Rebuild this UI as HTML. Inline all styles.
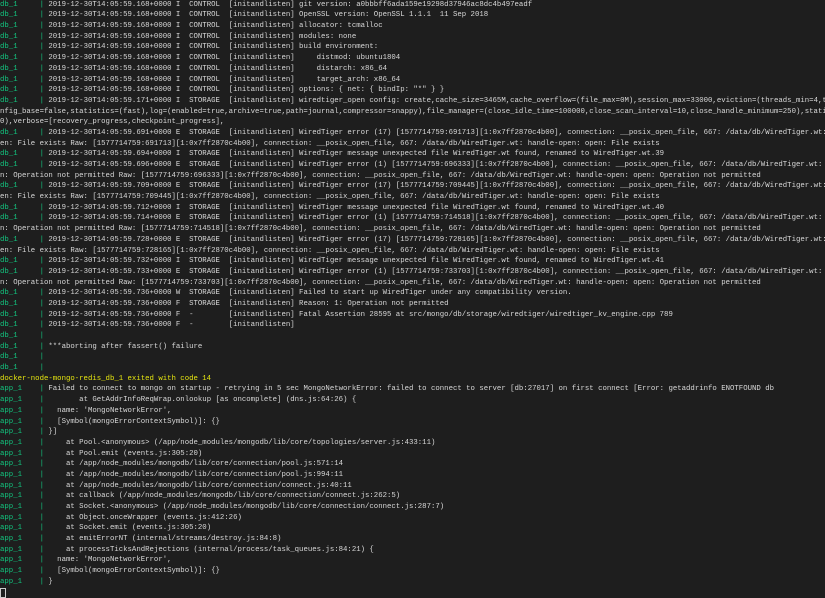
<!DOCTYPE html>
<html><head><meta charset="utf-8"><style>
html,body{margin:0;padding:0;background:#1e1e1e;width:825px;height:597px;overflow:hidden}
pre{margin:0;margin-top:-0.3px;font-family:"Liberation Mono",monospace;font-size:7.34px;line-height:10.686px;color:#d8d8d8;white-space:pre;overflow:hidden;width:825px}
.g{color:#12c57f}.y{color:#e5e510}
.cur{position:absolute;left:0;top:588px;width:4px;height:8px;border:1px solid #ccc}
</style></head><body><pre><span class="g">db_1     |</span> 2019-12-30T14:05:59.168+0000 I  CONTROL  [initandlisten] git version: a0bbbff6ada159e19298d37946ac8dc4b497eadf
<span class="g">db_1     |</span> 2019-12-30T14:05:59.168+0000 I  CONTROL  [initandlisten] OpenSSL version: OpenSSL 1.1.1  11 Sep 2018
<span class="g">db_1     |</span> 2019-12-30T14:05:59.168+0000 I  CONTROL  [initandlisten] allocator: tcmalloc
<span class="g">db_1     |</span> 2019-12-30T14:05:59.168+0000 I  CONTROL  [initandlisten] modules: none
<span class="g">db_1     |</span> 2019-12-30T14:05:59.168+0000 I  CONTROL  [initandlisten] build environment:
<span class="g">db_1     |</span> 2019-12-30T14:05:59.168+0000 I  CONTROL  [initandlisten]     distmod: ubuntu1804
<span class="g">db_1     |</span> 2019-12-30T14:05:59.168+0000 I  CONTROL  [initandlisten]     distarch: x86_64
<span class="g">db_1     |</span> 2019-12-30T14:05:59.168+0000 I  CONTROL  [initandlisten]     target_arch: x86_64
<span class="g">db_1     |</span> 2019-12-30T14:05:59.168+0000 I  CONTROL  [initandlisten] options: { net: { bindIp: "*" } }
<span class="g">db_1     |</span> 2019-12-30T14:05:59.171+0000 I  STORAGE  [initandlisten] wiredtiger_open config: create,cache_size=3465M,cache_overflow=(file_max=0M),session_max=33000,eviction=(threads_min=4,threads_max=4),co
nfig_base=false,statistics=(fast),log=(enabled=true,archive=true,path=journal,compressor=snappy),file_manager=(close_idle_time=100000,close_scan_interval=10,close_handle_minimum=250),statistics_log=(wait=
0),verbose=[recovery_progress,checkpoint_progress],
<span class="g">db_1     |</span> 2019-12-30T14:05:59.691+0000 E  STORAGE  [initandlisten] WiredTiger error (17) [1577714759:691713][1:0x7ff2870c4b00], connection: __posix_open_file, 667: /data/db/WiredTiger.wt: handle-op
en: File exists Raw: [1577714759:691713][1:0x7ff2870c4b00], connection: __posix_open_file, 667: /data/db/WiredTiger.wt: handle-open: open: File exists
<span class="g">db_1     |</span> 2019-12-30T14:05:59.694+0000 I  STORAGE  [initandlisten] WiredTiger message unexpected file WiredTiger.wt found, renamed to WiredTiger.wt.39
<span class="g">db_1     |</span> 2019-12-30T14:05:59.696+0000 E  STORAGE  [initandlisten] WiredTiger error (1) [1577714759:696333][1:0x7ff2870c4b00], connection: __posix_open_file, 667: /data/db/WiredTiger.wt: handle-ope
n: Operation not permitted Raw: [1577714759:696333][1:0x7ff2870c4b00], connection: __posix_open_file, 667: /data/db/WiredTiger.wt: handle-open: open: Operation not permitted
<span class="g">db_1     |</span> 2019-12-30T14:05:59.709+0000 E  STORAGE  [initandlisten] WiredTiger error (17) [1577714759:709445][1:0x7ff2870c4b00], connection: __posix_open_file, 667: /data/db/WiredTiger.wt: handle-op
en: File exists Raw: [1577714759:709445][1:0x7ff2870c4b00], connection: __posix_open_file, 667: /data/db/WiredTiger.wt: handle-open: open: File exists
<span class="g">db_1     |</span> 2019-12-30T14:05:59.712+0000 I  STORAGE  [initandlisten] WiredTiger message unexpected file WiredTiger.wt found, renamed to WiredTiger.wt.40
<span class="g">db_1     |</span> 2019-12-30T14:05:59.714+0000 E  STORAGE  [initandlisten] WiredTiger error (1) [1577714759:714518][1:0x7ff2870c4b00], connection: __posix_open_file, 667: /data/db/WiredTiger.wt: handle-ope
n: Operation not permitted Raw: [1577714759:714518][1:0x7ff2870c4b00], connection: __posix_open_file, 667: /data/db/WiredTiger.wt: handle-open: open: Operation not permitted
<span class="g">db_1     |</span> 2019-12-30T14:05:59.728+0000 E  STORAGE  [initandlisten] WiredTiger error (17) [1577714759:728165][1:0x7ff2870c4b00], connection: __posix_open_file, 667: /data/db/WiredTiger.wt: handle-op
en: File exists Raw: [1577714759:728165][1:0x7ff2870c4b00], connection: __posix_open_file, 667: /data/db/WiredTiger.wt: handle-open: open: File exists
<span class="g">db_1     |</span> 2019-12-30T14:05:59.732+0000 I  STORAGE  [initandlisten] WiredTiger message unexpected file WiredTiger.wt found, renamed to WiredTiger.wt.41
<span class="g">db_1     |</span> 2019-12-30T14:05:59.733+0000 E  STORAGE  [initandlisten] WiredTiger error (1) [1577714759:733703][1:0x7ff2870c4b00], connection: __posix_open_file, 667: /data/db/WiredTiger.wt: handle-ope
n: Operation not permitted Raw: [1577714759:733703][1:0x7ff2870c4b00], connection: __posix_open_file, 667: /data/db/WiredTiger.wt: handle-open: open: Operation not permitted
<span class="g">db_1     |</span> 2019-12-30T14:05:59.736+0000 W  STORAGE  [initandlisten] Failed to start up WiredTiger under any compatibility version.
<span class="g">db_1     |</span> 2019-12-30T14:05:59.736+0000 F  STORAGE  [initandlisten] Reason: 1: Operation not permitted
<span class="g">db_1     |</span> 2019-12-30T14:05:59.736+0000 F  -        [initandlisten] Fatal Assertion 28595 at src/mongo/db/storage/wiredtiger/wiredtiger_kv_engine.cpp 789
<span class="g">db_1     |</span> 2019-12-30T14:05:59.736+0000 F  -        [initandlisten]
<span class="g">db_1     |</span>
<span class="g">db_1     |</span> ***aborting after fassert() failure
<span class="g">db_1     |</span>
<span class="g">db_1     |</span>
<span class="y">docker-node-mongo-redis_db_1 exited with code 14</span>
<span class="g">app_1    |</span> Failed to connect to mongo on startup - retrying in 5 sec MongoNetworkError: failed to connect to server [db:27017] on first connect [Error: getaddrinfo ENOTFOUND db
<span class="g">app_1    |</span>        at GetAddrInfoReqWrap.onlookup [as oncomplete] (dns.js:64:26) {
<span class="g">app_1    |</span>   name: 'MongoNetworkError',
<span class="g">app_1    |</span>   [Symbol(mongoErrorContextSymbol)]: {}
<span class="g">app_1    |</span> }]
<span class="g">app_1    |</span>     at Pool.&lt;anonymous&gt; (/app/node_modules/mongodb/lib/core/topologies/server.js:433:11)
<span class="g">app_1    |</span>     at Pool.emit (events.js:305:20)
<span class="g">app_1    |</span>     at /app/node_modules/mongodb/lib/core/connection/pool.js:571:14
<span class="g">app_1    |</span>     at /app/node_modules/mongodb/lib/core/connection/pool.js:994:11
<span class="g">app_1    |</span>     at /app/node_modules/mongodb/lib/core/connection/connect.js:40:11
<span class="g">app_1    |</span>     at callback (/app/node_modules/mongodb/lib/core/connection/connect.js:262:5)
<span class="g">app_1    |</span>     at Socket.&lt;anonymous&gt; (/app/node_modules/mongodb/lib/core/connection/connect.js:287:7)
<span class="g">app_1    |</span>     at Object.onceWrapper (events.js:412:26)
<span class="g">app_1    |</span>     at Socket.emit (events.js:305:20)
<span class="g">app_1    |</span>     at emitErrorNT (internal/streams/destroy.js:84:8)
<span class="g">app_1    |</span>     at processTicksAndRejections (internal/process/task_queues.js:84:21) {
<span class="g">app_1    |</span>   name: 'MongoNetworkError',
<span class="g">app_1    |</span>   [Symbol(mongoErrorContextSymbol)]: {}
<span class="g">app_1    |</span> }</pre><div class="cur"></div></body></html>
